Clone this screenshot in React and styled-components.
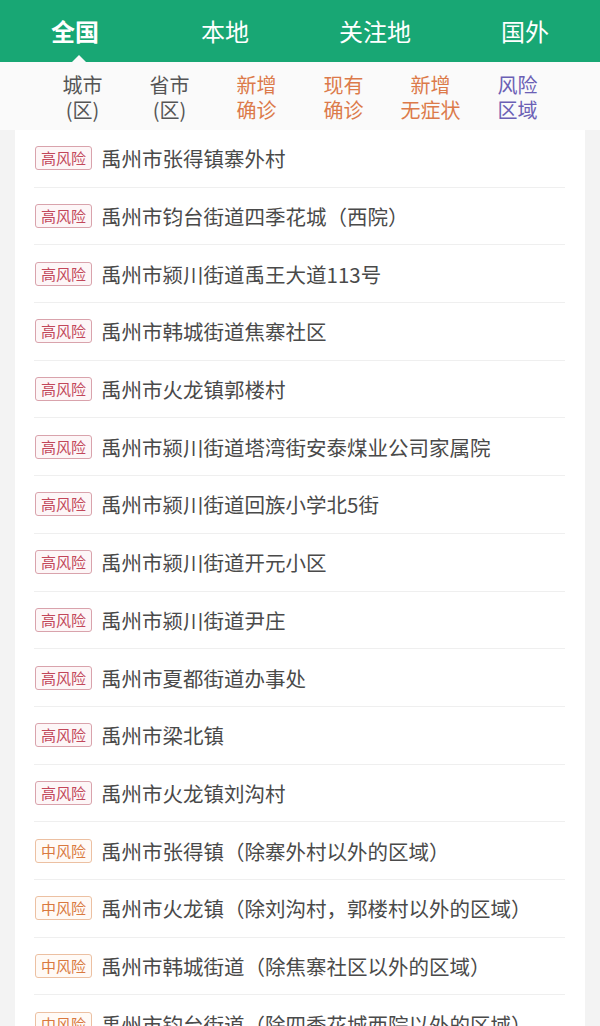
import React from "react";
import styled, { createGlobalStyle, css } from "styled-components";

const GlobalStyle = createGlobalStyle`
  html, body {
    margin: 0;
    padding: 0;
    background: #f3f3f3;
    font-family: "Noto Sans CJK SC", "Noto Sans", sans-serif;
  }
`;

const Page = styled.div`
  width: 600px;
  height: 1026px;
  overflow: hidden;
  background: #f3f3f3;
`;

const TabBar = styled.div`
  height: 62px;
  background: #18a774;
  display: grid;
  grid-template-columns: repeat(4, 150px);
`;

const Tab = styled.div`
  position: relative;
  display: flex;
  align-items: center;
  justify-content: center;
  color: #fff;
  font-size: 24px;
  font-weight: ${(p) => (p.active ? 700 : 400)};
  padding-bottom: 2px;

  ${(p) =>
    p.active &&
    css`
      &::after {
        content: "";
        position: absolute;
        left: 72px;
        bottom: 0;
        border-left: 7px solid transparent;
        border-right: 7px solid transparent;
        border-bottom: 7px solid #fafafa;
      }
    `}
`;

const SubHeader = styled.div`
  height: 68px;
  background: #fafafa;
  display: grid;
  grid-template-columns: repeat(6, 87px);
  padding-left: 39px;
  align-items: center;
`;

const ColHead = styled.div`
  text-align: center;
  font-size: 20px;
  line-height: 25px;
  color: ${(p) => p.color};
  padding-top: 2px;
`;

const Card = styled.div`
  margin: 0 15px;
  background: #fff;
  padding: 0 20px 0 19px;
`;

const Row = styled.div`
  height: 57.7px;
  box-sizing: border-box;
  border-bottom: 1px solid #efefef;
  display: flex;
  align-items: center;
  gap: 9px;
  padding-left: 1px;
`;

const Badge = styled.span`
  flex: none;
  font-size: 15px;
  line-height: 20px;
  padding: 1px 5px;
  border-radius: 3px;
  border: 1px solid ${(p) => (p.level === "high" ? "#d9a3ac" : "#ecc0a2")};
  color: ${(p) => (p.level === "high" ? "#c2475a" : "#d9793f")};
  background: ${(p) => (p.level === "high" ? "#fdf6f7" : "#fffaf6")};
`;

const Place = styled.span`
  font-size: 20.5px;
  color: #4a4a4a;
  white-space: nowrap;
`;

const tabs = ["全国", "本地", "关注地", "国外"];

const cols = [
  ["城市", "(区)", "#555"],
  ["省市", "(区)", "#555"],
  ["新增", "确诊", "#dc7a4a"],
  ["现有", "确诊", "#dc7a4a"],
  ["新增", "无症状", "#dc7a4a"],
  ["风险", "区域", "#6b60b5"],
];

const rows = [
  ["high", "禹州市张得镇寨外村"],
  ["high", "禹州市钧台街道四季花城（西院）"],
  ["high", "禹州市颍川街道禹王大道113号"],
  ["high", "禹州市韩城街道焦寨社区"],
  ["high", "禹州市火龙镇郭楼村"],
  ["high", "禹州市颍川街道塔湾街安泰煤业公司家属院"],
  ["high", "禹州市颍川街道回族小学北5街"],
  ["high", "禹州市颍川街道开元小区"],
  ["high", "禹州市颍川街道尹庄"],
  ["high", "禹州市夏都街道办事处"],
  ["high", "禹州市梁北镇"],
  ["high", "禹州市火龙镇刘沟村"],
  ["mid", "禹州市张得镇（除寨外村以外的区域）"],
  ["mid", "禹州市火龙镇（除刘沟村，郭楼村以外的区域）"],
  ["mid", "禹州市韩城街道（除焦寨社区以外的区域）"],
  ["mid", "禹州市钧台街道（除四季花城西院以外的区域）"],
];

export default function App() {
  return (
    <Page>
      <GlobalStyle />
      <TabBar>
        {tabs.map((t, i) => (
          <Tab key={t} active={i === 0}>
            {t}
          </Tab>
        ))}
      </TabBar>
      <SubHeader>
        {cols.map(([a, b, c], i) => (
          <ColHead key={i} color={c}>
            {a}
            <br />
            {b}
          </ColHead>
        ))}
      </SubHeader>
      <Card>
        {rows.map(([level, name], i) => (
          <Row key={i}>
            <Badge level={level}>{level === "high" ? "高风险" : "中风险"}</Badge>
            <Place>{name}</Place>
          </Row>
        ))}
      </Card>
    </Page>
  );
}
